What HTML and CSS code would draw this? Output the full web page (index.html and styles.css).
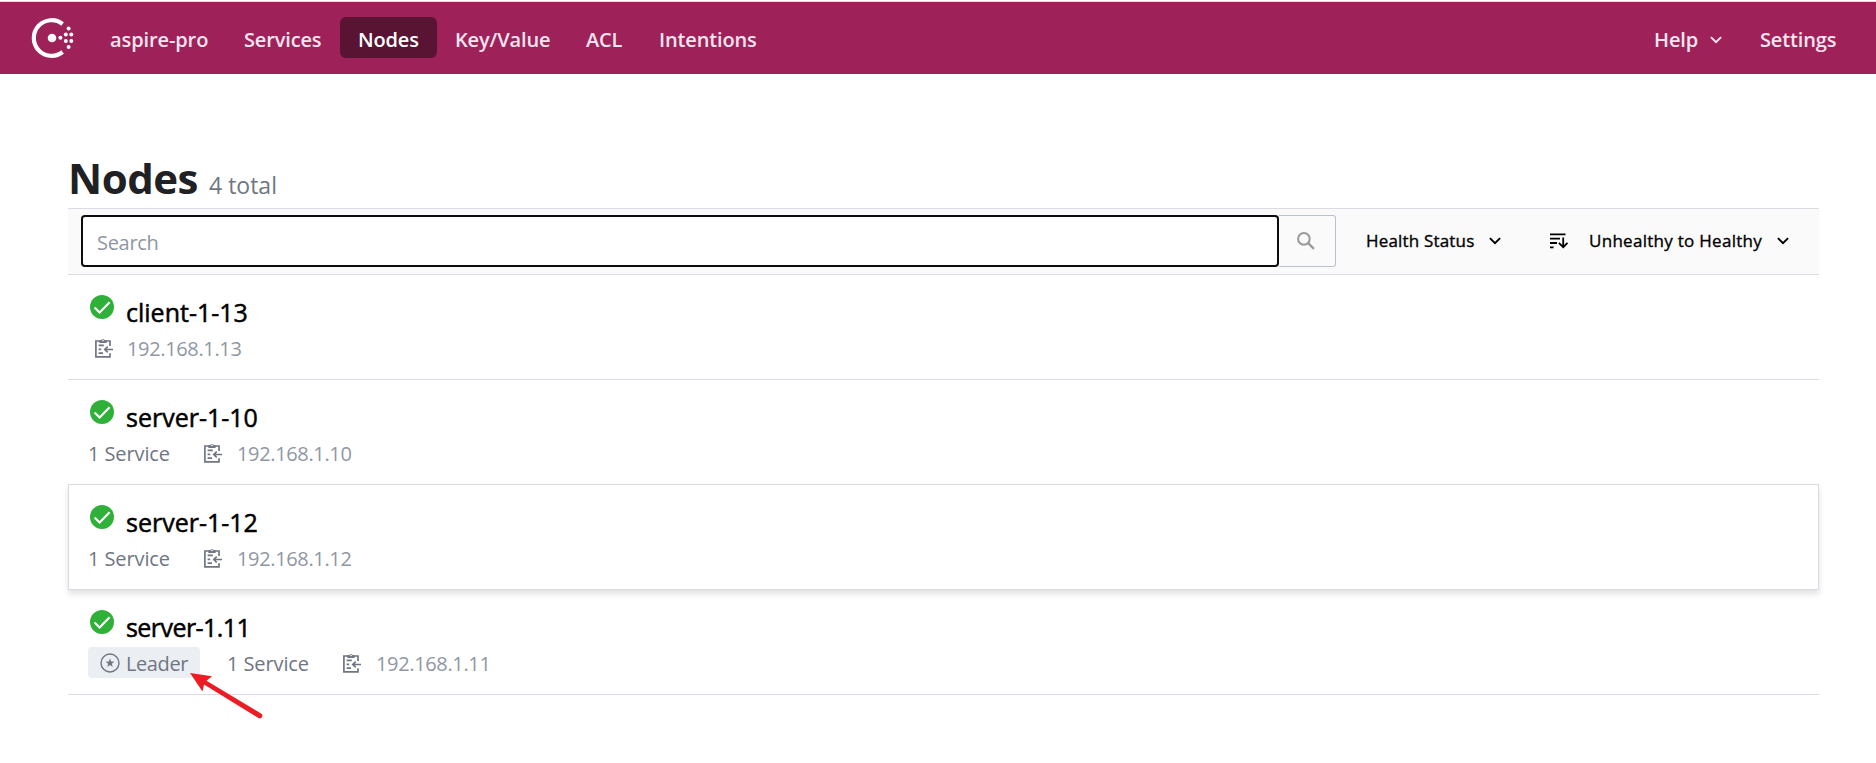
FILE: index.html
```html
<!DOCTYPE html>
<html lang="en">
<head>
<meta charset="utf-8">
<title>Nodes</title>
<link rel="stylesheet" href="styles.css">
</head>
<body>
<svg class="defs" width="0" height="0">
  <symbol id="check" viewBox="0 0 24 24"><circle cx="12" cy="12" r="12" fill="#2eb039"/><path d="M4.600 12.500l5 5L19.600 7.300" fill="none" stroke="#fff" stroke-width="2.200"/></symbol>
  <symbol id="clip" viewBox="0 0 18 20"><g fill="none" stroke="#6f7682" stroke-width="1.700"><path d="M15 8V3H.9v15.900H15v-3.700"/><path d="M18 11.500H10M12.700 8.600l-2.900 2.900 2.900 2.900"/><path d="M3.600 7.300h5.200M3.600 11.300h2.600M3.600 15.200h4.400"/></g><path d="M4.300 2.200h2a1.700 1.700 0 013.300 0h2v2.900H4.300z" fill="#6f7682"/><circle cx="7.950" cy="2.400" r=".8" fill="#fff"/></symbol>
  <symbol id="chev" viewBox="0 0 12 8"><path d="M.9 1.100L6 6.100l5.100-5" fill="none" stroke="currentColor" stroke-width="2"/></symbol>
</svg>
<header class="bar">
  <svg class="logo" viewBox="0 0 42 40" fill="#fff"><path d="M30.600 6A17.800 17.800 0 1 0 30.600 34" fill="none" stroke="#fff" stroke-width="4.200"/><circle cx="20" cy="20" r="4.300"/><circle cx="28.400" cy="19.800" r="2"/><circle cx="33.800" cy="16.600" r="2"/><circle cx="33.800" cy="23" r="2"/><circle cx="39.300" cy="16.600" r="2"/><circle cx="39.300" cy="23" r="2"/><circle cx="36.600" cy="10.500" r="2"/><circle cx="36.600" cy="29" r="2"/></svg>
  <nav class="nav">
    <a class="dc">aspire-pro</a><a class="services">Services</a><a class="nodes active">Nodes</a><a class="kv">Key/Value</a><a class="acl">ACL</a><a class="intentions">Intentions</a>
  </nav>
  <nav class="nav side"><a class="help">Help<svg class="chev"><use href="#chev"/></svg></a><a class="settings">Settings</a></nav>
</header>
<main class="main">
  <div class="heading"><h1>Nodes</h1><span class="total">4 total</span></div>
  <div class="toolbar">
    <div class="search">Search</div>
    <div class="go"><svg width="18" height="18" viewBox="0 0 18 18" fill="none" stroke="#999"><circle cx="6.900" cy="6.900" r="5.800" stroke-width="2"/><path d="M10.900 10.900l6 6" stroke-width="2.200"/></svg></div>
    <div class="filter health"><span>Health Status</span><svg class="chev"><use href="#chev"/></svg></div>
    <div class="filter sort"><svg class="sorticon" width="19" height="16" viewBox="0 0 19 16" fill="none" stroke="#000" stroke-width="1.800"><path d="M0 1.400h15.500M0 5.700h10M0 10h7M0 14.300h3.500"/><path d="M13.200 4.600v9.500M8.900 9.900l4.300 4.300 4.300-4.300"/></svg><span>Unhealthy to Healthy</span><svg class="chev"><use href="#chev"/></svg></div>
  </div>
  <ul class="list">
    <li class="row"><div class="name"><svg class="check"><use href="#check"/></svg><span>client-1-13</span></div>
      <div class="meta only-ip"><svg class="clip"><use href="#clip"/></svg><span class="ip">192.168.1.13</span></div></li>
    <li class="row"><div class="name"><svg class="check"><use href="#check"/></svg><span>server-1-10</span></div>
      <div class="meta"><span class="service">1 Service</span><svg class="clip"><use href="#clip"/></svg><span class="ip">192.168.1.10</span></div></li>
    <li class="row hover"><div class="name"><svg class="check"><use href="#check"/></svg><span>server-1-12</span></div>
      <div class="meta"><span class="service">1 Service</span><svg class="clip"><use href="#clip"/></svg><span class="ip">192.168.1.12</span></div></li>
    <li class="row"><div class="name dotted"><svg class="check"><use href="#check"/></svg><span>server-1.11</span></div>
      <div class="meta"><span class="leader"><svg width="20" height="20" viewBox="0 0 20 20"><circle cx="10" cy="10" r="9" fill="none" stroke="#6f7682" stroke-width="1.400"/><path d="M10 5.500l1.150 3.100 3.250.1-2.600 2 .95 3.200L10 12.050 7.250 13.900l.95-3.200-2.600-2 3.250-.1z" fill="#6f7682"/></svg><span>Leader</span></span><span class="service">1 Service</span><svg class="clip"><use href="#clip"/></svg><span class="ip">192.168.1.11</span></div></li>
  </ul>
</main>
<svg class="arrow" viewBox="0 0 76 50"><path d="M0 0L22 3.300 16.500 7.800 71 40.500A2.500 2.500 0 0 1 68.500 45L14 11.500 12.500 18.500z" fill="#ed1c24"/></svg>
</body>
</html>
```
FILE: styles.css
```css
* { box-sizing: border-box; }
body { margin: 0; height: 763px; overflow: hidden; background: #fff; font-family: "Open Sans", "Noto Sans", sans-serif; }
svg { display: block; flex: none; overflow: visible; }
.defs { position: absolute; }
.bar { margin-top: 1px; height: 73px; border-top: 1px solid #dcdcdc; background: #9e2159; display: flex; padding-left: 32px; }
.logo { width: 42px; height: 40px; margin-top: 16px; margin-right: 18px; }
.nav { display: flex; margin-top: 15px; color: #f8e4ee; font-size: 20px; font-weight: 600; line-height: 45px; }
.nav a { height: 41px; padding-left: 18px; white-space: nowrap; letter-spacing: -0.15px; }
.nav .dc { width: 134px; letter-spacing: -0.1px; }
.nav .services { width: 114px; }
.nav .active { width: 97px; background: #591434; color: #fff; border-radius: 6px; }
.nav .kv { width: 131px; }
.nav .acl { width: 73px; }
.side { margin-left: auto; }
.nav .help { display: flex; align-items: center; width: 106px; padding-top: 4px; }
.nav .settings { width: 134px; }
.chev { width: 12px; height: 8px; margin-left: 12px; }
.main { margin: 0 57px 0 68px; padding-top: 74px; }
.heading { height: 60px; display: flex; align-items: baseline; line-height: 60px; }
h1 { margin: 0; width: 141px; font-size: 42px; font-weight: 700; color: #1f2124; letter-spacing: -0.5px; }
.total { font-size: 23px; color: #6f7682; }
.toolbar { height: 67px; border: solid #dbdbe3; border-width: 1px 0; background: #fafafb; display: flex; padding: 6px 0 0 13px; }
.search { width: 1198px; height: 52px; border: 2px solid #0c0c0e; border-radius: 4px; background: #fff; padding-left: 14px; font-size: 20px; line-height: 51px; letter-spacing: -0.3px; color: #8e96a3; }
.go { width: 57px; height: 52px; border: 1px solid #bac1cc; border-left: 0; border-radius: 0 3px 3px 0; padding: 16px 0 0 18px; }
.filter { display: flex; align-items: center; height: 50px; font-size: 17px; letter-spacing: 0.18px; color: #000; -webkit-text-stroke: 0.35px; white-space: nowrap; }
.health { margin-left: 30px; width: 184px; }
.filter .chev { margin: 2px 0 0 15px; }
.sort span { margin-left: 20px; letter-spacing: 0.28px; }
.sorticon { margin-top: 2px; }
.list { list-style: none; margin: 0; padding: 0; }
.row { height: 105px; border-bottom: 1px solid #dbdbe3; padding: 20px 0 0 20px; }
.hover { margin-top: -1px; height: 106px; border: 1px solid #dbdbe3; padding-left: 19px; box-shadow: 0 4px 6px rgba(0,0,0,.12); }
.name { height: 37px; display: flex; padding-left: 2px; }
.check { width: 24px; height: 24px; }
.name span { margin-left: 12px; font-size: 25px; -webkit-text-stroke: 0.5px; line-height: 34px; color: #000; }
.dotted span { letter-spacing: -0.55px; }
.meta { height: 31px; display: flex; align-items: center; font-size: 20px; line-height: 31px; white-space: nowrap; }
.meta .clip { width: 18px; height: 20px; }
.only-ip { padding-left: 7px; }
.service { width: 116px; padding-top: 1px; letter-spacing: -0.1px; color: #6f7682; }
.ip { margin-left: 15px; padding-top: 1px; letter-spacing: -0.35px; color: #9097a4; }
.only-ip .ip { margin-left: 14px; }
.leader { display: flex; align-items: center; width: 112px; height: 31px; background: #ebeef2; border-radius: 4px; padding-left: 12px; margin-right: 27px; color: #6f7682; }
.leader span { margin-left: 6px; padding-top: 1px; letter-spacing: -0.4px; }
.arrow { position: absolute; left: 190px; top: 673px; width: 76px; height: 50px; }
```
